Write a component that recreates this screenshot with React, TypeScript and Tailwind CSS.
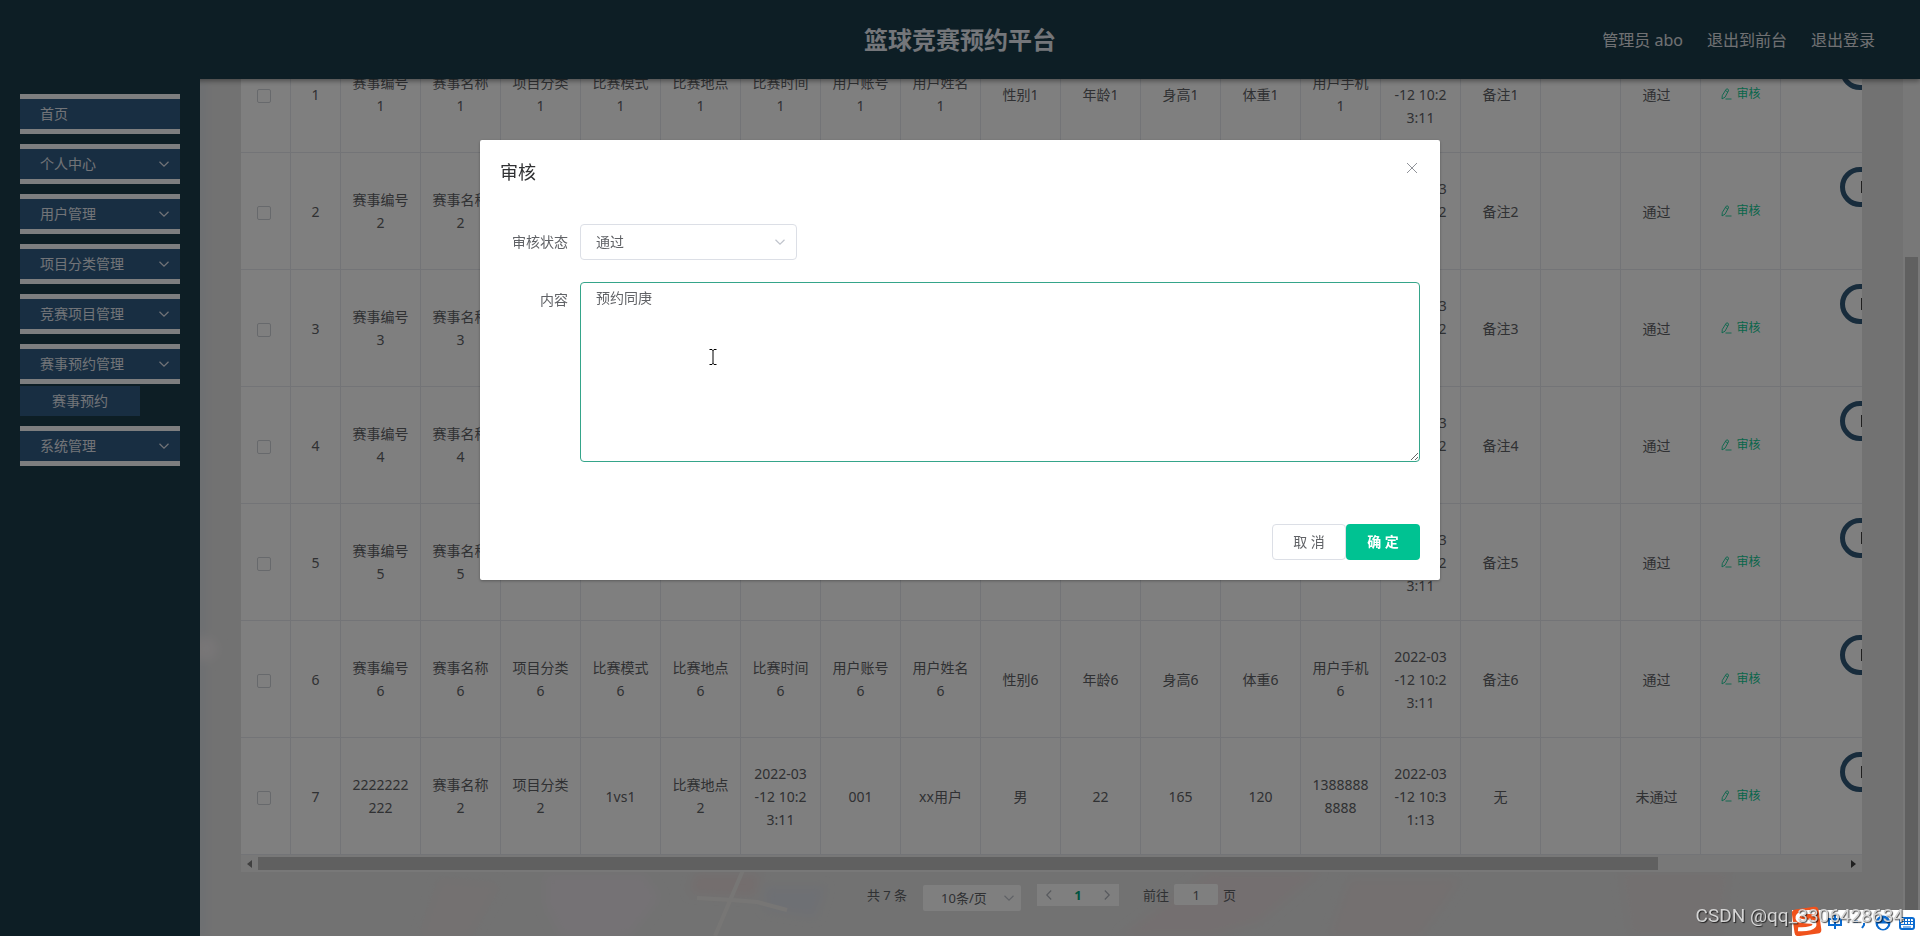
import { useState } from 'react'

const FONT = "font-['Noto_Sans','Noto_Sans_CJK_SC',sans-serif]"

type MenuItem = { label: string; children?: string[]; leaf?: boolean }

const menu: MenuItem[] = [
    { label: '首页', leaf: true },
    { label: '个人中心' },
    { label: '用户管理' },
    { label: '项目分类管理' },
    { label: '竞赛项目管理' },
    { label: '赛事预约管理', children: ['赛事预约'] },
    { label: '系统管理' },
]

const wrapped = ['赛事编号', '赛事名称', '项目分类', '比赛模式', '比赛地点', '比赛时间', '用户账号', '用户姓名']
const short = ['性别', '年龄', '身高', '体重']

function sampleRow(n: number): string[] {
    return [
        ...wrapped.map((name) => `${name}\n${n}`),
        ...short.map((name) => `${name}${n}`),
        `用户手机\n${n}`,
        '2022-03\n-12 10:2\n3:11',
        `备注${n}`,
        '',
    ]
}

const rows: { cells: string[]; status: string }[] = [
    ...[1, 2, 3, 4, 5, 6].map((n) => ({ cells: sampleRow(n), status: '通过' })),
    {
        cells: [
            '2222222\n222',
            '赛事名称\n2',
            '项目分类\n2',
            '1vs1',
            '比赛地点\n2',
            '2022-03\n-12 10:2\n3:11',
            '001',
            'xx用户',
            '男',
            '22',
            '165',
            '120',
            '1388888\n8888',
            '2022-03\n-12 10:3\n1:13',
            '无',
            '',
        ],
        status: '未通过',
    },
]

function Chevron({ className }: { className: string }) {
    return (
        <svg viewBox="0 0 12 12" className={className} fill="none" stroke="currentColor" strokeWidth="1.2" aria-hidden="true">
            <path d="M1.5 3.8 6 8.2l4.5-4.4" />
        </svg>
    )
}

function EditIcon() {
    return (
        <svg viewBox="0 0 12 12" className="size-3" fill="none" stroke="currentColor" strokeWidth="0.9" aria-hidden="true">
            <path d="M6.2 1.2q1-.6 1.800 0 .9.700.4 1.700L5 9.200 2 10.900l.3-3.400zM5.500 2.600l2.300 1.400M5.500 11h6" />
        </svg>
    )
}

function Header() {
    return (
        <header className="relative z-10 grid h-[79px] shrink-0 grid-cols-3 items-center bg-[#1b3c4b] px-[45px] shadow-[0_2px_5px_rgba(0,0,0,0.4)]">
            <h1 className="col-start-2 text-center text-2xl font-bold text-[#e8ecf4]">篮球竞赛预约平台</h1>
            <nav className="flex justify-end gap-6 text-base text-[#e0e2e6]">
                <span>管理员 abo</span>
                <a href="#front">退出到前台</a>
                <a href="#logout">退出登录</a>
            </nav>
        </header>
    )
}

function Sidebar() {
    return (
        <aside className="relative z-10 flex w-[200px] shrink-0 flex-col gap-2.5 bg-[#1b3c4b] px-5 pt-[15px] text-sm text-[#e4e8f0]">
            {menu.map((item) => (
                <div key={item.label} className="flex flex-col gap-0.5">
                    <button className="flex h-10 items-center justify-between border-y-[5px] border-[#fafcff] bg-[#305c84] pr-2.5 pl-5 leading-5">
                        {item.label}
                        {!item.leaf && <Chevron className="size-3" />}
                    </button>
                    {item.children?.map((child) => (
                        <a key={child} href="#booking" className="w-[120px] bg-[#305c84] text-center leading-[30px]">
                            {child}
                        </a>
                    ))}
                </div>
            ))}
        </aside>
    )
}

const CELL = 'border-r border-b border-[#e6e9ee] text-center whitespace-pre-line'

function BookingTable() {
    return (
        <div className="overflow-hidden bg-white">
            <table className="w-[1820px] table-fixed border-separate border-spacing-0 text-sm leading-[23px] text-[#606266]">
                <colgroup>
                    <col className="w-[50px]" />
                    <col className="w-[50px]" />
                    {rows[0].cells.map((_, i) => (
                        <col key={i} className="w-[80px]" />
                    ))}
                    <col className="w-[80px]" />
                    <col className="w-[80px]" />
                    <col />
                </colgroup>
                <tbody>
                    {rows.map((row, r) => (
                        <tr key={r} className="h-[117px]">
                            <td className={`${CELL} pr-1`}>
                                <input
                                    type="checkbox"
                                    aria-label={`选择 ${r + 1}`}
                                    className="size-3.5 appearance-none rounded-xs border border-[#cfd2d8] bg-white align-middle"
                                />
                            </td>
                            <td className={CELL}>{r + 1}</td>
                            {row.cells.map((value, c) => (
                                <td key={c} className={CELL}>{value}</td>
                            ))}
                            <td className={`${CELL} pr-2`}>{row.status}</td>
                            <td className={CELL}>
                                <button className="inline-flex items-center gap-1 text-xs text-[#12cc96]">
                                    <EditIcon />
                                    审核
                                </button>
                            </td>
                            <td className="border-b border-[#e6e9ee] pt-[14px] pl-[59px] align-top">
                                <button
                                    aria-label="更多"
                                    className="flex size-10 items-center justify-end rounded-full border-[5px] border-[#305878]"
                                >
                                    <span className="h-3 w-3.5 border-l border-[#404040]" />
                                </button>
                            </td>
                        </tr>
                    ))}
                </tbody>
            </table>
            <div className="flex h-[17px] items-center justify-between bg-[#f1f1f1] px-1.5">
                <span className="border-y-4 border-r-[5px] border-y-transparent border-r-[#808080]" />
                <span className="mr-auto ml-1.5 h-[13px] w-[87%] bg-[#c1c1c1]" />
                <span className="border-y-4 border-l-[5px] border-y-transparent border-l-[#404040]" />
            </div>
        </div>
    )
}

function Pagination() {
    return (
        <div className="flex h-16 items-start justify-center pt-3 text-[13px] leading-[22px] text-[#606266]">
            <span className="mr-4">共 7 条</span>
            <div className="relative mr-4 pt-px">
                <select aria-label="每页条数" className="h-[26px] w-[98px] appearance-none rounded-xs bg-white pl-[18px]">
                    <option>10条/页</option>
                </select>
                <Chevron className="pointer-events-none absolute top-2 right-1.5 size-3 text-[#c0c4cc]" />
            </div>
            <div className="mr-6 flex h-[22px] w-[82px] items-center justify-between bg-white px-1.5">
                <button aria-label="上一页"><Chevron className="size-3 rotate-90 text-[#b0b4bc]" /></button>
                <button className="font-bold text-[#00a880]">1</button>
                <button aria-label="下一页"><Chevron className="size-3 -rotate-90 text-[#b0b4bc]" /></button>
            </div>
            <label htmlFor="page">前往</label>
            <input id="page" defaultValue="1" className="mx-[5px] h-[21px] w-11 rounded-xs bg-white text-center" />
            <span>页</span>
        </div>
    )
}

// Washed-out court photo behind the table
function Backdrop() {
    return (
        <svg className="absolute inset-0 size-full" viewBox="0 0 1703 857" preserveAspectRatio="none" aria-hidden="true">
            <defs>
                <filter id="soft"><feGaussianBlur stdDeviation="5" /></filter>
            </defs>
            <g filter="url(#soft)">
                <path d="M0 0h3v857H0z" fill="#c8d4e6" />
                <circle cx="6" cy="570" r="12" fill="#f0ecee" />
                <path d="M345 795h100l15 24-30 38h-70l-15-30z" fill="#eae4ea" />
                <path d="M240 800l60 5-30 52h-50z" fill="#e8e2e2" />
                <path d="M495 795h65l-5 22-65-3z" fill="#e8dcdc" />
                <path d="M565 808h60l-10 30-50-8z" fill="#dde0e8" />
                <path d="M1010 792h110l-60 50-50 15h-90z" fill="#e8dfe0" />
                <path d="M1150 800h110l-40 57h-90z" fill="#e8e0e0" />
                <path d="M1420 792h110l-10 65h-90z" fill="#e6e1e1" />
            </g>
            <path d="M497 819l35 2 25 2 30 8M543 791l-28 66" fill="none" stroke="#efedea" strokeWidth="4" />
        </svg>
    )
}

function AuditDialog() {
    const [status, setStatus] = useState('通过')
    const [content, setContent] = useState('预约同庚')

    return (
        <div role="dialog" aria-label="审核" className="w-1/2 rounded-xs bg-white p-5 text-sm text-[#606266] shadow-[0_1px_3px_rgba(0,0,0,0.3)]">
            <div className="flex justify-between">
                <h2 className="text-lg leading-6 text-[#303133]">审核</h2>
                <button aria-label="关闭" className="h-4 px-0.5 text-[#909399]">
                    <svg viewBox="0 0 12 12" className="size-3" fill="none" stroke="currentColor" aria-hidden="true">
                        <path d="M1 1l10 10M11 1 1 11" />
                    </svg>
                </button>
            </div>
            <div className="mt-10 flex">
                <label htmlFor="status" className="w-20 pr-3 text-right leading-9">审核状态</label>
                <div className="relative">
                    <select
                        id="status"
                        value={status}
                        onChange={(event) => setStatus(event.target.value)}
                        className="h-9 w-[217px] appearance-none rounded border border-[#dcdfe6] pl-[15px]"
                    >
                        <option>通过</option>
                        <option>未通过</option>
                    </select>
                    <Chevron className="pointer-events-none absolute top-3 right-[11px] size-3 text-[#c0c4cc]" />
                </div>
            </div>
            <div className="mt-[22px] flex">
                <label htmlFor="content" className="w-20 pr-3 text-right leading-9">内容</label>
                <textarea
                    id="content"
                    value={content}
                    onChange={(event) => setContent(event.target.value)}
                    className="h-[180px] flex-1 resize rounded border border-[#35a58a] px-[15px] py-1 leading-[21px] outline-none"
                />
            </div>
            <div className="mt-[62px] flex justify-end">
                <button className="h-9 w-[74px] rounded border border-[#dcdfe6]">取 消</button>
                <button className="h-9 w-[74px] rounded bg-[#00c292] font-bold text-white">确 定</button>
            </div>
        </div>
    )
}

function InputBar() {
    return (
        <div className="fixed right-0 bottom-0 h-[26px] w-[128px] bg-white">
            <svg viewBox="0 0 128 30" className="absolute right-0 bottom-0 h-[30px] w-[128px]" aria-hidden="true">
                <g transform="rotate(-8 14 15)">
                    <rect x="1" y="2" width="27" height="27" rx="4" fill="#f0521c" />
                    <path d="M24 8C16 5 6 6 6 11c0 6 16 3 16 8 0 4-8 5-17 3" fill="none" stroke="#fff" strokeWidth="4" />
                </g>
                <g fill="none" stroke="#0b6bd0" strokeWidth="2">
                    <path d="M37 13h12v6H37zM43 9v14" />
                    <path d="M62 15.500h4M72 17v2l-2 3" />
                </g>
                <circle cx="91" cy="17" r="7.500" fill="#0b6bd0" />
                <path d="M86.500 18a4.500 4.500 0 0 0 9 0zM87.500 14h2M92.500 14h2" fill="#fff" stroke="#fff" />
                <rect x="108" y="12" width="14" height="11" rx="2" fill="none" stroke="#0b6bd0" strokeWidth="2" />
                <path d="M109 15.500h12M109 18.500h12M112.500 13v6M115.500 13v6M118.500 13v6M111 21h8" stroke="#0b6bd0" />
            </svg>
        </div>
    )
}

function App() {
    return (
        <div className={`flex h-screen flex-col overflow-hidden ${FONT}`}>
            <Header />
            <div className="flex min-h-0 flex-1">
                <Sidebar />
                <main className="relative flex min-w-0 flex-1 flex-col justify-end overflow-hidden bg-[#e4e4e4] px-[41px]">
                    <Backdrop />
                    <div className="relative">
                        <BookingTable />
                        <Pagination />
                    </div>
                </main>
                <div className="flex w-[17px] shrink-0 justify-center bg-[#f1f1f1]">
                    <div className="mt-[178px] mb-4 w-[13px] bg-[#c1c1c1]" />
                </div>
            </div>

            <div className="fixed inset-0 z-20 flex items-start justify-center bg-black/50 pt-[140px]">
                <AuditDialog />
            </div>

            <div className="pointer-events-none fixed inset-0 z-30">
                <svg viewBox="0 0 8 16" className="absolute top-[349px] left-[709px] h-4 w-2" fill="none" stroke="#000" aria-hidden="true">
                    <path d="M.5.5h2.500l1 1 1-1h2.500M4 1v14M.5 15.500h2.500l1-1 1 1h2.500" />
                </svg>
                <InputBar />
                <span className="fixed right-4 bottom-2 font-['Roboto',sans-serif] text-[19px] leading-6 text-[#d4d4d4] [text-shadow:1px_1px_1px_rgba(0,0,0,0.7)]">
                    CSDN @qq_3306428634
                </span>
            </div>
        </div>
    )
}

export default App
